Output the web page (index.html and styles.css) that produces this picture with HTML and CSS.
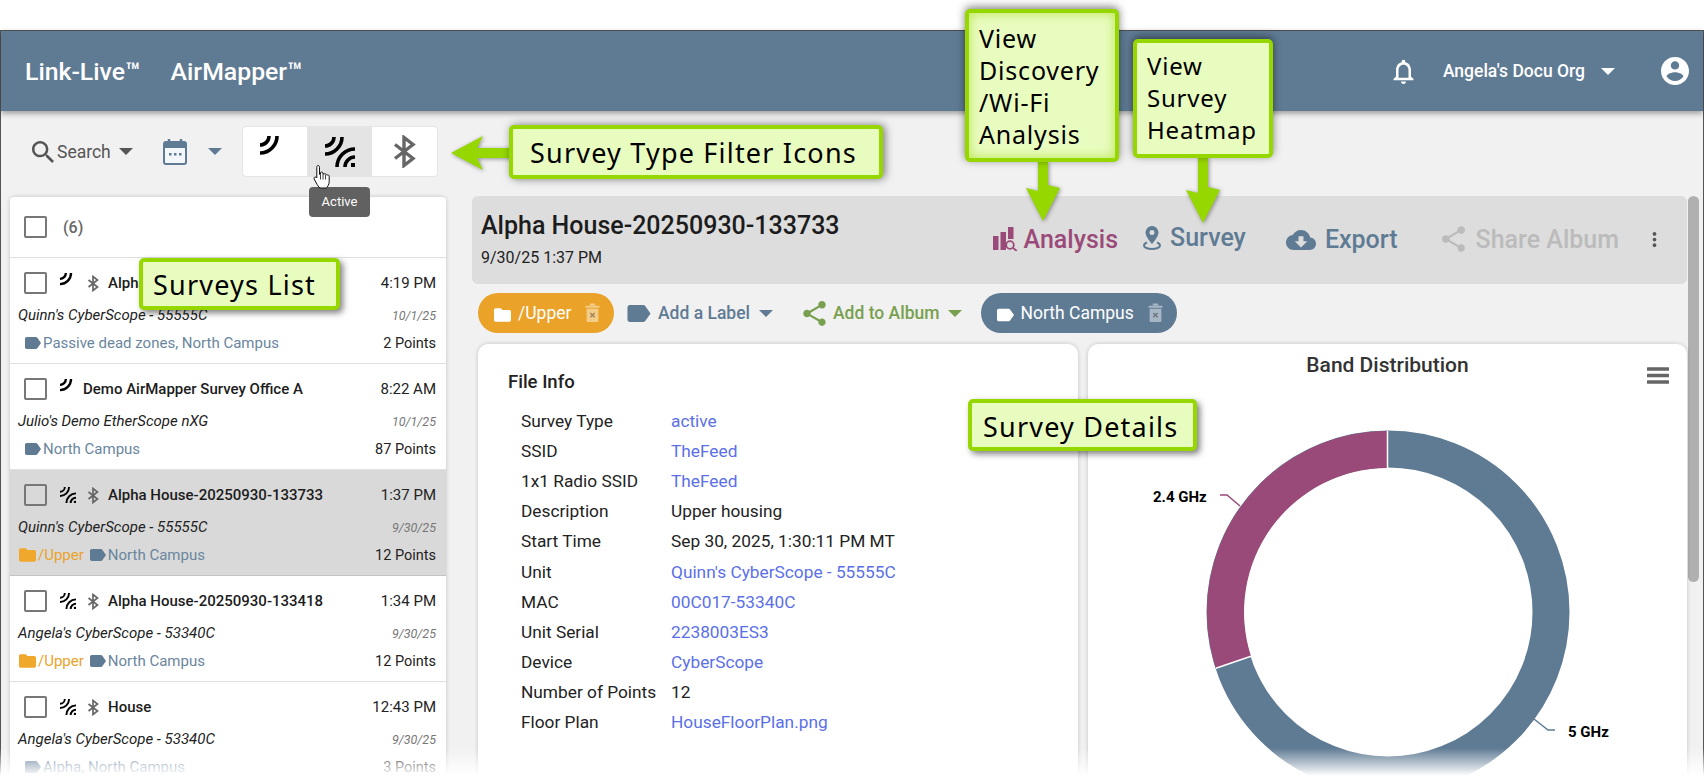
FILE: index.html
```html
<!DOCTYPE html>
<html lang="en">
<head>
  <meta charset="UTF-8" />
  <title>Link-Live AirMapper</title>
  <link rel="stylesheet" href="styles.css">
</head>
<body>

  <svg class="defs" width="0" height="0">
    <symbol id="i-passive" viewBox="0 0 20 20">
      <path d="M9 0a9 9 0 0 1-9 9M17 0a17 17 0 0 1-17 17" fill="none" stroke="currentColor" stroke-width="3.6"/>
    </symbol>
    <symbol id="i-active" viewBox="0 0 30 30">
      <path d="M9 0a9 9 0 0 1-9 9M17 0a17 17 0 0 1-17 17" fill="none" stroke="currentColor" stroke-width="3.6"/>
      <path d="M30 20a10 10 0 0 0-10 10M30 12a18 18 0 0 0-18 18" fill="none" stroke="currentColor" stroke-width="3.6"/>
      <rect x="26" y="26" width="4" height="4" fill="currentColor"/>
    </symbol>
    <symbol id="i-bt" viewBox="0 0 24 32">
      <path d="M3 9l18 14-9 7V2l9 7L3 23" fill="none" stroke="currentColor" stroke-width="3.4"/>
    </symbol>
    <symbol id="i-label" viewBox="3 5 19 14">
      <path d="M17.63 5.84C17.27 5.33 16.67 5 16 5L5 5.01C3.9 5.01 3 5.9 3 7v10c0 1.1.9 1.99 2 1.99L16 19c.67 0 1.27-.33 1.63-.84L22 12l-4.37-6.16z" fill="currentColor"/>
    </symbol>
    <symbol id="i-folder" viewBox="2 4 20 16">
      <path d="M10 4H4c-1.1 0-1.99.9-1.99 2L2 18c0 1.1.9 2 2 2h16c1.1 0 2-.9 2-2V8c0-1.1-.9-2-2-2h-8l-2-2z" fill="currentColor"/>
    </symbol>
    <symbol id="i-share" viewBox="3 2 18 20">
      <path d="M18 16.08c-.76 0-1.44.3-1.96.77L8.91 12.7c.05-.23.09-.46.09-.7s-.04-.47-.09-.7l7.05-4.11c.54.5 1.25.81 2.04.81 1.66 0 3-1.34 3-3s-1.34-3-3-3-3 1.34-3 3c0 .24.04.47.09.7L8.04 9.81C7.5 9.31 6.79 9 6 9c-1.66 0-3 1.34-3 3s1.34 3 3 3c.79 0 1.5-.31 2.04-.81l7.12 4.16c-.05.21-.08.43-.08.65 0 1.61 1.31 2.92 2.92 2.92s2.92-1.31 2.92-2.92-1.31-2.92-2.92-2.92z" fill="currentColor"/>
    </symbol>
    <symbol id="i-trash" viewBox="0 0 14 18">
      <path d="M4.5 1h5M0.5 3.2h13" stroke="currentColor" stroke-width="1.8" fill="none"/>
      <path d="M1.5 5h11v11.5a1 1 0 0 1-1 1h-9a1 1 0 0 1-1-1z" fill="currentColor"/>
      <path d="M5 9l4 4M9 9l-4 4" stroke="#000" stroke-opacity=".35" stroke-width="1.4"/>
    </symbol>
  </svg>

  <div class="window">
    <header class="topbar">
      <span class="brand">Link-Live™</span>
      <span class="brand brand-second">AirMapper™</span>
      <div class="topbar-right">
        <svg class="bell" viewBox="4 2 16 20"><path d="M12 22c1.1 0 2-.9 2-2h-4c0 1.1.9 2 2 2zm6-6v-5c0-3.07-1.63-5.64-4.5-6.32V4c0-.83-.67-1.5-1.5-1.5s-1.5.67-1.5 1.5v.68C7.64 5.36 6 7.92 6 11v5l-2 2v1h16v-1l-2-2zm-2 1H8v-6c0-2.48 1.51-4.5 4-4.5s4 2.02 4 4.5v6z" fill="currentColor"/></svg>
        <span class="org">Angela's Docu Org</span>
        <span class="caret caret-white"></span>
        <svg class="avatar" viewBox="2 2 20 20"><path d="M12 2C6.48 2 2 6.48 2 12s4.48 10 10 10 10-4.48 10-10S17.52 2 12 2zm0 3c1.66 0 3 1.34 3 3s-1.34 3-3 3-3-1.34-3-3 1.34-3 3-3zm0 14.2c-2.5 0-4.71-1.28-6-3.22.03-1.99 4-3.08 6-3.08 1.99 0 5.97 1.09 6 3.08-1.29 1.94-3.5 3.22-6 3.22z" fill="currentColor"/></svg>
      </div>
    </header>

    <div class="main">
      <aside class="sidebar">
        <div class="toolbar">
          <svg class="search-icon" viewBox="3 3 17.5 17.5"><path d="M15.5 14h-.79l-.28-.27C15.41 12.59 16 11.11 16 9.5 16 5.91 13.09 3 9.5 3S3 5.91 3 9.5 5.91 16 9.5 16c1.61 0 3.09-.59 4.23-1.57l.27.28v.79l5 4.99L20.49 19l-4.99-5zm-6 0C7.01 14 5 11.99 5 9.5S7.01 5 9.5 5 14 7.01 14 9.5 11.99 14 9.5 14z" fill="currentColor"/></svg>
          <span class="search-label">Search</span>
          <span class="caret caret-dark"></span>
          <svg class="cal-icon" viewBox="0 0 24 26">
            <path d="M6 0v4M18 0v4" stroke="#5f7b94" stroke-width="2.5"/>
            <rect x="1" y="3" width="22" height="22" rx="2" fill="#f4f7fa" stroke="#5f7b94" stroke-width="2"/>
            <rect x="1" y="3" width="22" height="6" fill="#5f7b94"/>
            <rect x="6" y="14" width="2.5" height="2.5" fill="#5f7b94"/>
            <rect x="11" y="14" width="2.5" height="2.5" fill="#5f7b94"/>
            <rect x="16" y="14" width="2.5" height="2.5" fill="#5f7b94"/>
          </svg>
          <span class="caret caret-blue"></span>
          <div class="type-filter">
            <div class="type-btn"><svg class="ft-passive"><use href="#i-passive"/></svg></div>
            <div class="type-btn type-btn-hover"><svg class="ft-active"><use href="#i-active"/></svg></div>
            <div class="type-btn"><svg class="ft-bt"><use href="#i-bt"/></svg></div>
          </div>
        </div>

        <div class="survey-list">
          <div class="list-head">
            <span class="check"></span>
            <span class="count">(6)</span>
          </div>

          <div class="row">
            <div class="row-line">
              <span class="check"></span>
              <svg class="ic-passive"><use href="#i-passive"/></svg>
              <svg class="ic-bt"><use href="#i-bt"/></svg>
              <span class="row-title">Alpha</span>
              <span class="row-time">4:19 PM</span>
            </div>
            <div class="row-line row-device">
              <span class="device">Quinn's CyberScope - 55555C</span>
              <span class="row-date">10/1/25</span>
            </div>
            <div class="row-line row-labels">
              <svg class="ic-label"><use href="#i-label"/></svg>
              <span class="label-text">Passive dead zones, North Campus</span>
              <span class="row-points">2 Points</span>
            </div>
          </div>

          <div class="row">
            <div class="row-line">
              <span class="check"></span>
              <svg class="ic-passive ic-passive-solo"><use href="#i-passive"/></svg>
              <span class="row-title">Demo AirMapper Survey Office A</span>
              <span class="row-time">8:22 AM</span>
            </div>
            <div class="row-line row-device">
              <span class="device">Julio's Demo EtherScope nXG</span>
              <span class="row-date">10/1/25</span>
            </div>
            <div class="row-line row-labels">
              <svg class="ic-label"><use href="#i-label"/></svg>
              <span class="label-text">North Campus</span>
              <span class="row-points">87 Points</span>
            </div>
          </div>

          <div class="row row-selected">
            <div class="row-line">
              <span class="check"></span>
              <svg class="ic-active"><use href="#i-active"/></svg>
              <svg class="ic-bt"><use href="#i-bt"/></svg>
              <span class="row-title">Alpha House-20250930-133733</span>
              <span class="row-time">1:37 PM</span>
            </div>
            <div class="row-line row-device">
              <span class="device">Quinn's CyberScope - 55555C</span>
              <span class="row-date">9/30/25</span>
            </div>
            <div class="row-line row-labels row-labels-folder">
              <svg class="ic-folder"><use href="#i-folder"/></svg>
              <span class="folder-text">/Upper</span>
              <svg class="ic-label"><use href="#i-label"/></svg>
              <span class="label-text">North Campus</span>
              <span class="row-points">12 Points</span>
            </div>
          </div>

          <div class="row">
            <div class="row-line">
              <span class="check"></span>
              <svg class="ic-active"><use href="#i-active"/></svg>
              <svg class="ic-bt"><use href="#i-bt"/></svg>
              <span class="row-title">Alpha House-20250930-133418</span>
              <span class="row-time">1:34 PM</span>
            </div>
            <div class="row-line row-device">
              <span class="device">Angela's CyberScope - 53340C</span>
              <span class="row-date">9/30/25</span>
            </div>
            <div class="row-line row-labels row-labels-folder">
              <svg class="ic-folder"><use href="#i-folder"/></svg>
              <span class="folder-text">/Upper</span>
              <svg class="ic-label"><use href="#i-label"/></svg>
              <span class="label-text">North Campus</span>
              <span class="row-points">12 Points</span>
            </div>
          </div>

          <div class="row">
            <div class="row-line">
              <span class="check"></span>
              <svg class="ic-active"><use href="#i-active"/></svg>
              <svg class="ic-bt"><use href="#i-bt"/></svg>
              <span class="row-title">House</span>
              <span class="row-time">12:43 PM</span>
            </div>
            <div class="row-line row-device">
              <span class="device">Angela's CyberScope - 53340C</span>
              <span class="row-date">9/30/25</span>
            </div>
            <div class="row-line row-labels">
              <svg class="ic-label"><use href="#i-label"/></svg>
              <span class="label-text">Alpha, North Campus</span>
              <span class="row-points">3 Points</span>
            </div>
          </div>
        </div>
      </aside>

      <section class="details">
        <div class="title-bar">
          <div class="title-text">
            <h2>Alpha House-20250930-133733</h2>
            <p>9/30/25 1:37 PM</p>
          </div>
          <div class="actions">
            <span class="action action-analysis">
              <svg class="a-analysis" viewBox="0 0 25 24">
                <rect x="0" y="9" width="5.5" height="14" fill="currentColor"/>
                <rect x="7.5" y="5" width="5.5" height="18" fill="currentColor"/>
                <rect x="15" y="0" width="5.5" height="12" fill="currentColor"/>
                <circle cx="17" cy="18" r="3.8" fill="none" stroke="currentColor" stroke-width="1.8"/>
                <path d="M19.8 20.8l4 3.2" stroke="currentColor" stroke-width="1.8"/>
              </svg>
              Analysis
            </span>
            <span class="action action-survey">
              <svg class="a-survey" viewBox="0 0 18 24">
                <path d="M9 0a6.5 6.5 0 0 0-6.5 6.5C2.5 11 9 18 9 18s6.5-7 6.5-11.5A6.5 6.5 0 0 0 9 0zm0 9a2.5 2.5 0 1 1 0-5 2.5 2.5 0 0 1 0 5z" fill="currentColor"/>
                <path d="M4 16.5C2 17.3 1 18.3 1 19.5 1 21.5 4.5 23 9 23s8-1.5 8-3.5c0-1.2-1-2.2-3-3" fill="none" stroke="currentColor" stroke-width="2"/>
              </svg>
              Survey
            </span>
            <span class="action action-export">
              <svg class="a-export" viewBox="0 4 24 16"><path d="M19.35 10.04C18.67 6.59 15.64 4 12 4 9.11 4 6.6 5.64 5.35 8.04 2.34 8.36 0 10.91 0 14c0 3.31 2.69 6 6 6h13c2.76 0 5-2.24 5-5 0-2.64-2.05-4.78-4.65-4.96zM17 13l-5 5-5-5h3V9h4v4h3z" fill="currentColor"/></svg>
              Export
            </span>
            <span class="action action-share">
              <svg class="a-share"><use href="#i-share"/></svg>
              Share Album
            </span>
            <svg class="a-more" viewBox="10 4 4 16"><path d="M12 8c1.1 0 2-.9 2-2s-.9-2-2-2-2 .9-2 2 .9 2 2 2zm0 2c-1.1 0-2 .9-2 2s.9 2 2 2 2-.9 2-2-.9-2-2-2zm0 6c-1.1 0-2 .9-2 2s.9 2 2 2 2-.9 2-2-.9-2-2-2z" fill="currentColor"/></svg>
          </div>
        </div>

        <div class="chips">
          <span class="chip chip-folder">
            <svg class="chip-icon"><use href="#i-folder"/></svg>
            /Upper
            <svg class="chip-trash"><use href="#i-trash"/></svg>
          </span>
          <span class="chip-link chip-add-label">
            <svg class="add-label-icon"><use href="#i-label"/></svg>
            Add a Label
            <span class="caret caret-blue"></span>
          </span>
          <span class="chip-link chip-add-album">
            <svg class="add-album-icon"><use href="#i-share"/></svg>
            Add to Album
            <span class="caret caret-green"></span>
          </span>
          <span class="chip chip-label">
            <svg class="chip-icon"><use href="#i-label"/></svg>
            North Campus
            <svg class="chip-trash"><use href="#i-trash"/></svg>
          </span>
        </div>

        <div class="cards">
          <div class="card card-info">
            <h3>File Info</h3>
            <dl class="info-table">
              <dt>Survey Type</dt><dd class="link">active</dd>
              <dt>SSID</dt><dd class="link">TheFeed</dd>
              <dt>1x1 Radio SSID</dt><dd class="link">TheFeed</dd>
              <dt>Description</dt><dd>Upper housing</dd>
              <dt>Start Time</dt><dd>Sep 30, 2025, 1:30:11 PM MT</dd>
              <dt>Unit</dt><dd class="link">Quinn's CyberScope - 55555C</dd>
              <dt>MAC</dt><dd class="link">00C017-53340C</dd>
              <dt>Unit Serial</dt><dd class="link">2238003ES3</dd>
              <dt>Device</dt><dd class="link">CyberScope</dd>
              <dt>Number of Points</dt><dd>12</dd>
              <dt>Floor Plan</dt><dd class="link">HouseFloorPlan.png</dd>
            </dl>
          </div>

          <div class="card card-chart">
            <h3>Band Distribution</h3>
            <svg class="chart-menu" viewBox="0 0 22 17">
              <path d="M1 2h20M1 8.5h20M1 15h20" stroke="currentColor" stroke-width="3.5" stroke-linecap="round"/>
            </svg>
            <svg class="donut" viewBox="0 0 599 432">
              <circle cx="300" cy="268" r="163" fill="none" stroke="#5f7b94" stroke-width="37"/>
              <path d="M127.9 324.2A181 181 0 0 1 299.5 87V124A144 144 0 0 0 163 312.3z" fill="#9a4a78"/>
              <path d="M299.5 87V124M127.9 324.2L163 312.3" stroke="#fff" stroke-width="1.5"/>
              <path d="M132 151h7l13 11" fill="none" stroke="#9a4a78" stroke-width="1.5"/>
              <path d="M446 375l14 11h7" fill="none" stroke="#5f7b94" stroke-width="1.5"/>
              <text class="donut-label" x="65" y="158">2.4 GHz</text>
              <text class="donut-label" x="480" y="393">5 GHz</text>
            </svg>
          </div>
        </div>
      </section>

      <div class="scrollbar"></div>
    </div>
  </div>

  <!-- tooltip and pointer over the filter buttons -->
  <div class="tooltip">Active</div>
  <svg class="hand" viewBox="0 0 18 25">
    <path d="M5 1.5c1 0 1.5.8 1.5 1.8v7.2l1-.2V8.5c1-.8 2.2-.5 2.5.5v1l1 .1c.8-.6 2-.4 2.3.6l.9.3c1-.4 2 .2 2 1.3v5.2c0 2.5-1.500 5.500-3 6.500H7c-1.500-1-2.500-3-3.700-5L1.200 15c-.5-1 0-2 1-2 .8 0 1.200.5 1.600 1V3.300C3.800 2.300 4.200 1.500 5 1.500z" fill="#fff" stroke="#111" stroke-width="1"/>
    <path d="M7.5 10.5v5M10 10v5.5M12.5 11v4.5" stroke="#111" stroke-width=".8"/>
  </svg>

  <!-- annotation callouts drawn on top of the screenshot -->
  <svg class="arrow arrow-filter" viewBox="0 0 60 34"><path d="M0 17L32 0l-6 12h34v10H26l6 12z"/></svg>
  <svg class="arrow arrow-analysis" viewBox="0 0 34 60"><path d="M12 0h10v24l12 3-17 33L0 27l12 3z"/></svg>
  <svg class="arrow arrow-survey" viewBox="0 0 34 66"><path d="M12 0h10v30l12 3-17 33L0 33l12 3z"/></svg>

  <div class="callout callout-analysis">View<br>Discovery<br>/Wi-Fi<br>Analysis</div>
  <div class="callout callout-survey">View<br>Survey<br>Heatmap</div>
  <div class="callout callout-filter">Survey Type Filter Icons</div>
  <div class="callout callout-list">Surveys List</div>
  <div class="callout callout-details">Survey Details</div>

  <div class="fade"></div>

</body>
</html>
```

FILE: styles.css
```css
* {
  margin: 0; padding: 0; box-sizing: border-box;
}

body {
  position: relative;
  width: 1704px;
  height: 776px;
  overflow: hidden;
  background: #fff;
  padding-top: 30px;
  font-family: Roboto, sans-serif;
  color: #222;
}

.defs {
  position: absolute;
}

.window {
  height: 746px;
  border: 1px solid #555;
  border-bottom: none;
  background: #f1f1f1;
  display: flex;
  flex-direction: column;
}

/* top bar */
.topbar {
  height: 80px;
  flex: none;
  background: #5f7b94;
  color: #fff;
  display: flex;
  align-items: center;
  padding: 0 14px 0 24px;
  box-shadow: 0 2px 6px rgba(0,0,0,0.4);
  position: relative;
}

.brand {
  font-size: 24.8px;
  font-weight: 500;
}

.brand-second {
  margin-left: 30px;
}

.topbar-right {
  margin-left: auto;
  display: flex;
  align-items: center;
}

.bell {
  width: 21px;
  height: 25px;
}

.org {
  margin-left: 29px;
  font-size: 17.5px;
  font-weight: 500;
}

.avatar {
  width: 28px;
  height: 28px;
  margin-left: 46px;
}

.caret {
  width: 0;
  height: 0;
  display: inline-block;
  border-left: 7px solid transparent;
  border-right: 7px solid transparent;
  border-top: 7px solid #5f7b94;
  flex: none;
}

.caret-white { border-top-color: #fff; margin-left: 16px; }
.caret-dark { border-top-color: #555; margin-left: 8px; }
.caret-blue { border-top-color: #5f7b94; }
.caret-green { border-top-color: #78a04f; }

/* layout */
.main {
  flex: 1;
  min-height: 0;
  display: flex;
  overflow: hidden;
}

.sidebar {
  width: 445px;
  flex: none;
  padding-left: 9px;
}

.toolbar {
  height: 86px;
  display: flex;
  align-items: center;
  padding: 0 0 5px 22px;
  color: #555;
}

.search-icon {
  width: 22px;
  height: 22px;
}

.search-label {
  margin-left: 3px;
  font-size: 17.5px;
}

.cal-icon {
  width: 24px;
  height: 26px;
  margin-left: 30px;
}

.toolbar .caret-blue {
  margin-left: 21px;
}

.type-filter {
  margin-left: 20px;
  width: 196px;
  height: 51px;
  display: flex;
  background: #fff;
  border: 1px solid #e5e5e5;
  border-radius: 4px;
  overflow: hidden;
}

.type-btn {
  flex: 1;
  display: flex;
  justify-content: center;
  align-items: center;
  color: #000;
}

.type-btn-hover {
  background: #e4e4e4;
}

.ft-passive { width: 20px; height: 20px; margin: 0 11px 12px 0; }
.ft-active { width: 30px; height: 30px; }
.ft-bt { width: 24px; height: 33px; color: #666; }

/* survey list */
.survey-list {
  width: 436px;
  background: #fff;
  border-radius: 4px 4px 0 0;
  box-shadow: 0 0 4px rgba(0,0,0,0.2);
}

.check {
  width: 23px;
  height: 22px;
  flex: none;
  display: inline-block;
  border: 2px solid #777;
  border-radius: 2px;
  background: transparent;
}

.list-head {
  height: 61px;
  display: flex;
  align-items: center;
  padding-left: 14px;
  border-bottom: 1px solid #e0e0e0;
}

.count {
  margin-left: 16px;
  font-size: 16px;
  font-weight: 500;
  color: #666;
}

.row {
  height: 106px;
  padding-top: 13px;
  border-bottom: 1px solid #e0e0e0;
}

.row-selected {
  background: #d9d9d9;
  border-bottom-color: #c4c4c4;
}

.row-line {
  height: 24px;
  display: flex;
  align-items: center;
  padding: 0 10px 0 14px;
}

.ic-passive { width: 13px; height: 13px; margin: 0 0 8px 13px; color: #000; }
.ic-passive-solo { margin-right: 1px; }
.ic-active { width: 16px; height: 16px; margin: 0 0 0 13px; color: #000; }
.ic-bt { width: 12px; height: 17px; margin-left: 11px; color: #666; }
.ic-passive + .ic-bt { margin-left: 14px; }

.ic-label {
  width: 16px;
  height: 12px;
  flex: none;
  color: #5f7b94;
}

.ic-folder {
  width: 17px;
  height: 14px;
  flex: none;
  color: #f0a82c;
}

.row-title {
  margin-left: 9px;
  font-size: 15px;
  font-weight: 500;
  color: #1c1c1c;
  white-space: nowrap;
}

.row-time {
  margin-left: auto;
  font-size: 15px;
  color: #222;
}

.row-device {
  margin-top: 8px;
  padding-left: 8px;
}

.device {
  font-size: 15px;
  font-style: italic;
  color: #222;
}

.row-date {
  margin-left: auto;
  font-size: 12.5px;
  font-style: italic;
  color: #777;
}

.row-labels {
  margin-top: 4px;
  padding-left: 15px;
}

.row-labels-folder {
  padding-left: 9px;
}

.folder-text {
  margin: 0 6px 0 2px;
  font-size: 15px;
  color: #eba228;
}

.label-text {
  margin-left: 2px;
  font-size: 15px;
  color: #6a869e;
}

.row-points {
  margin-left: auto;
  font-size: 14.5px;
  color: #222;
}

/* details */
.details {
  width: 1215px;
  flex: none;
  margin-left: 26px;
  padding-top: 85px;
}

.title-bar {
  height: 88px;
  background: #ddd;
  border-radius: 6px;
  display: flex;
  align-items: center;
  padding: 0 30px 2px 9px;
}

.title-text h2 {
  font-size: 25px;
  font-weight: 500;
  color: #1c1c1c;
}

.title-text p {
  margin-top: 8px;
  font-size: 16px;
  color: #222;
}

.actions {
  margin-left: auto;
  display: flex;
  align-items: center;
  font-size: 25px;
  font-weight: 500;
}

.action {
  display: flex;
  align-items: center;
}

.action-analysis { color: #9a4a78; }
.action-survey { color: #5f7b94; margin-left: 25px; margin-top: -3px; }
.action-export { color: #5f7b94; margin-left: 40px; }
.action-share { color: #bbb; margin-left: 44px; }

.a-analysis { width: 25px; height: 24px; margin-right: 6px; }
.a-survey { width: 18px; height: 24px; margin-right: 9px; }
.a-export { width: 30px; height: 20px; margin-right: 9px; margin-top: 2px; }
.a-share { width: 23px; height: 26px; margin-right: 11px; }
.a-more { width: 5px; height: 15px; margin-left: 33px; color: #555; }

/* chips */
.chips {
  margin-top: 9px;
  padding-left: 6px;
  height: 40px;
  display: flex;
  align-items: center;
}

.chip {
  height: 40px;
  border-radius: 20px;
  display: flex;
  align-items: center;
  color: #fff;
  font-size: 17.5px;
  font-weight: 400;
}

.chip-folder {
  width: 136px;
  background: #eba228;
  padding-left: 16px;
}

.chip-label {
  width: 196px;
  background: #5f7b94;
  padding-left: 16px;
  margin-left: 19px;
}

.chip-icon {
  width: 17px;
  height: 14px;
  margin-right: 6px;
  margin-top: 3px;
}

.chip-folder .chip-icon {
  margin-right: 7px;
}

.chip-trash {
  width: 15px;
  height: 20px;
  margin-left: 14px;
  color: rgba(255,255,255,0.45);
}

.chip-link {
  display: flex;
  align-items: center;
  font-size: 17.5px;
  font-weight: 500;
}

.chip-add-label {
  color: #5f7b94;
  margin-left: 13px;
}

.chip-add-label .caret { margin-left: 9px; }

.chip-add-album {
  color: #78a04f;
  margin-left: 30px;
}

.chip-add-album .caret { margin-left: 9px; }

.add-label-icon { width: 24px; height: 17px; margin-right: 7px; }
.add-album-icon { width: 23px; height: 25px; margin-right: 7px; }

/* cards */
.cards {
  margin-top: 11px;
  padding-left: 6px;
  display: grid;
  grid-template-columns: 600px 599px;
  gap: 10px;
}

.card {
  height: 500px;
  background: #fff;
  border-radius: 10px;
  box-shadow: 0 0 4px rgba(0,0,0,0.2);
  position: relative;
}

.card-info {
  padding: 28px 0 0 30px;
}

.card-info h3 {
  font-size: 18.5px;
  font-weight: 500;
  color: #222;
  line-height: 20px;
}

.info-table {
  margin: 14px 0 0 13px;
  display: grid;
  grid-template-columns: 150px 1fr;
  grid-auto-rows: 30.1px;
  align-items: center;
  font-size: 17.3px;
  color: #222;
}

.link {
  color: #5b70e8;
}

.card-chart h3 {
  padding-top: 10px;
  text-align: center;
  font-size: 21px;
  font-weight: 500;
  color: #333;
  line-height: 22px;
}

.chart-menu {
  position: absolute;
  top: 23px;
  right: 18px;
  width: 22px;
  height: 17px;
  color: #666;
}

.donut {
  display: block;
  width: 599px;
  height: 432px;
  margin-top: -32px;
}

.donut-label {
  font-size: 15px;
  font-weight: 700;
  fill: #000;
  font-family: Roboto, sans-serif;
}

.scrollbar {
  width: 11px;
  height: 386px;
  flex: none;
  margin: 85px 0 0 1px;
  background: #b0b0b0;
  border-radius: 6px;
}

/* overlays */
.tooltip {
  position: absolute;
  left: 309px;
  top: 187px;
  width: 61px;
  height: 30px;
  background: #616161;
  color: #fff;
  font-size: 13px;
  line-height: 30px;
  text-align: center;
  border-radius: 4px;
}

.hand {
  position: absolute;
  left: 313px;
  top: 164px;
  width: 18px;
  height: 25px;
}

.callout {
  position: absolute;
  background: #e9fcc0;
  border: 4px solid #97d700;
  border-radius: 5px;
  box-shadow: 3px 3px 6px rgba(0,0,0,0.5);
  color: #000;
  font-family: "Noto Sans", sans-serif;
  font-size: 27px;
  letter-spacing: 1.2px;
  white-space: nowrap;
}

.callout-analysis {
  left: 965px;
  top: 9px;
  width: 154px;
  height: 153px;
  padding: 9px 0 0 10px;
  font-size: 25px;
  letter-spacing: 0.8px;
  line-height: 32px;
  box-shadow: 0 -2px 8px rgba(0,0,0,0.5), inset 0 0 12px rgba(151,215,0,0.6);
}

.callout-survey {
  left: 1133px;
  top: 39px;
  width: 140px;
  height: 119px;
  padding: 7px 0 0 10px;
  font-size: 24px;
  letter-spacing: 0.8px;
  line-height: 32px;
  box-shadow: 0 -2px 8px rgba(0,0,0,0.5);
}

.callout-filter {
  left: 509px;
  top: 125px;
  width: 374px;
  height: 54px;
  padding-left: 17px;
  line-height: 48px;
  box-shadow: 2px 0 8px rgba(0,0,0,0.5);
}

.callout-list {
  left: 139px;
  top: 258px;
  width: 201px;
  height: 52px;
  padding-left: 10px;
  line-height: 46px;
}

.callout-details {
  left: 968px;
  top: 399px;
  width: 229px;
  height: 52px;
  padding-left: 11px;
  line-height: 47px;
}

.arrow {
  position: absolute;
  fill: #97d700;
  filter: drop-shadow(1px 1px 2px rgba(0,0,0,0.4));
}

.arrow-filter { left: 451px; top: 136px; width: 60px; height: 34px; }
.arrow-analysis { left: 1026px; top: 161px; width: 34px; height: 60px; }
.arrow-survey { left: 1186px; top: 157px; width: 34px; height: 66px; }

.fade {
  position: absolute;
  left: 0;
  right: 0;
  bottom: 0;
  height: 28px;
  background: linear-gradient(to bottom, rgba(255,255,255,0), #fff);
}
```
